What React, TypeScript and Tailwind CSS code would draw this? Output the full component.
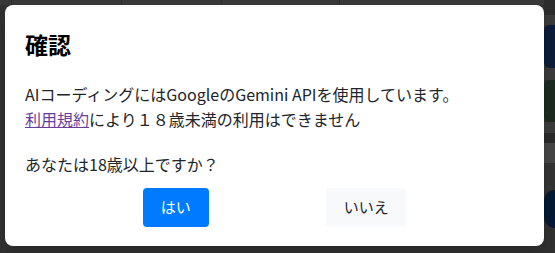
import React from 'react';

const font = { fontFamily: '"Noto Sans CJK JP", "Noto Sans", sans-serif' };

export default function App() {
  return (
    <div className="relative w-[555px] h-[253px] overflow-hidden bg-[#303030]" style={font}>
      {/* dimmed page behind the modal */}
      <div className="flex h-[5px] bg-[#383838]">
        <div className="w-[12px] border-r border-[#2a2a2a]" />
        <div className="w-[110px] border-r border-[#2a2a2a]" />
        <div className="w-[100px] border-r border-[#2a2a2a]" />
        <div className="w-[118px] border-r border-[#2a2a2a]" />
        <div className="flex-1" />
      </div>
      <div className="absolute right-0 top-0 w-[11px] h-full flex flex-col">
        <div className="h-[15px] bg-[#2c2c2c]" />
        <div className="h-[10px] bg-[#3a3a3a]" />
        <div className="h-[43px] bg-[#0b1d3a] rounded-l-md" />
        <div className="h-[12px] bg-[#3a3a3a]" />
        <div className="h-[42px] bg-[#1c2a1f] rounded-l-md" />
        <div className="h-[11px] bg-[#3a3a3a]" />
        <div className="h-[10px] bg-[#2a2a2a]" />
        <div className="h-[20px] bg-[#444444]" />
        <div className="h-[27px] bg-[#333333]" />
        <div className="h-[38px] bg-[#061933] rounded-l-full" />
        <div className="flex-1 bg-[#303030]" />
      </div>

      {/* modal */}
      <div className="absolute left-[5px] top-[5px] w-[539px] h-[241px] bg-white rounded-lg shadow-lg flex flex-col px-5">
        <h5 className="mt-[26px] text-[23px] leading-[26px] font-bold text-black">確認</h5>
        <div className="mt-[25px] text-[16px] leading-[25px] text-[#212529]">
          <p>
            AIコーディングにはGoogleのGemini APIを使用しています。
            <br />
            <a href="#" className="text-[#6a3d9a] underline">利用規約</a>により１８歳未満の利用はできません
          </p>
          <p className="mt-[20px]">あなたは18歳以上ですか？</p>
        </div>
        <div className="mt-[11px] flex justify-evenly items-center">
          <button className="w-[66px] h-[39px] rounded bg-[#007bff] text-white text-[15px]">はい</button>
          <button className="w-[80px] h-[39px] rounded bg-[#f8f9fa] text-[#212529] text-[15px]">いいえ</button>
        </div>
      </div>
    </div>
  );
}
